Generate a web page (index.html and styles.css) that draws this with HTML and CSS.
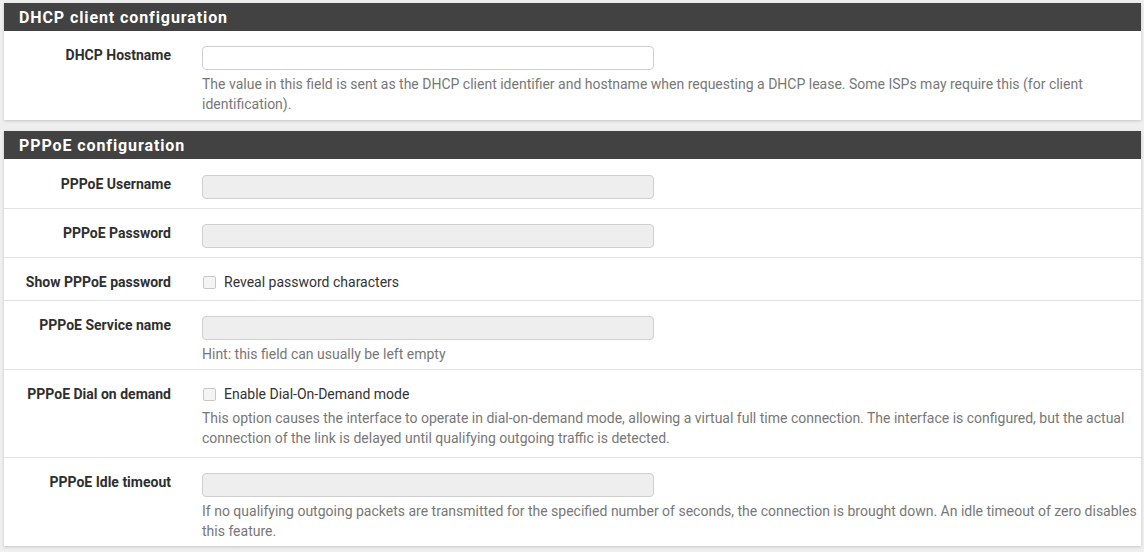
FILE: index.html
```html
<!DOCTYPE html>
<html>
<head>
<meta charset="utf-8">
<link rel="stylesheet" href="styles.css">
</head>
<body>
<div class="panel">
  <h2 class="panel-title">DHCP client configuration</h2>
  <div class="panel-body first-body">
    <div class="row">
      <div class="label">DHCP Hostname</div>
      <div class="field">
        <input class="input" type="text">
        <div class="help">The value in this field is sent as the DHCP client identifier and hostname when requesting a DHCP lease. Some ISPs may require this (for client identification).</div>
      </div>
    </div>
  </div>
</div>
<div class="panel">
  <h2 class="panel-title">PPPoE configuration</h2>
  <div class="panel-body second-body">
    <div class="row">
      <div class="label">PPPoE Username</div>
      <div class="field"><input class="input" type="text" disabled></div>
    </div>
    <div class="row">
      <div class="label">PPPoE Password</div>
      <div class="field"><input class="input" type="password" disabled></div>
    </div>
    <div class="row row-check">
      <div class="label">Show PPPoE password</div>
      <div class="field"><label class="check"><span class="box"></span>Reveal password characters</label></div>
    </div>
    <div class="row">
      <div class="label">PPPoE Service name</div>
      <div class="field">
        <input class="input" type="text" disabled>
        <div class="help">Hint: this field can usually be left empty</div>
      </div>
    </div>
    <div class="row row-check">
      <div class="label">PPPoE Dial on demand</div>
      <div class="field">
        <label class="check"><span class="box"></span>Enable Dial-On-Demand mode</label>
        <div class="help help-check">This option causes the interface to operate in dial-on-demand mode, allowing a virtual full time connection. The interface is configured, but the actual connection of the link is delayed until qualifying outgoing traffic is detected.</div>
      </div>
    </div>
    <div class="row">
      <div class="label">PPPoE Idle timeout</div>
      <div class="field">
        <input class="input" type="text" disabled>
        <div class="help">If no qualifying outgoing packets are transmitted for the specified number of seconds, the connection is brought down. An idle timeout of zero disables this feature.</div>
      </div>
    </div>
  </div>
</div>
</body>
</html>
```
FILE: styles.css
```css
html, body {
  margin: 0;
  background: #efefef;
}
body {
  padding: 3px 3px 0 4px;
  font-family: Roboto, "Liberation Sans", sans-serif;
  font-size: 14px;
  color: #333;
}
.panel {
  background: #fff;
  box-shadow: 0 1px 3px rgba(0, 0, 0, 0.18);
  margin-bottom: 11px;
}
.panel-title {
  margin: 0;
  height: 28px;
  box-sizing: border-box;
  padding: 4px 15px 0 15px;
  background: #424242;
  color: #fff;
  font-size: 16px;
  font-weight: 700;
  letter-spacing: 0.9px;
  line-height: 21px;
}
.second-body {
  padding-top: 1px;
}
.row {
  display: flex;
  border-bottom: 1px solid #e2e2e2;
  padding: 15px 0 9px 0;
}
.row:last-child {
  border-bottom: none;
}
.row:has(.help) {
  padding-bottom: 5px;
}
.row-check:has(.help) {
  padding-bottom: 9px;
}
.first-body .row {
  padding-bottom: 6px;
}
.label {
  width: 167px;
  flex: none;
  padding-right: 31px;
  text-align: right;
  font-weight: 700;
  line-height: 18px;
  color: #2f2f2f;
}
.field {
  flex: 1;
  padding-right: 2px;
}
.input {
  display: block;
  box-sizing: border-box;
  width: 452px;
  height: 24px;
  margin: 0;
  border: 1px solid #cfcfcf;
  border-radius: 4px;
  background: #fff;
}
.input:disabled {
  background: #eeeeee;
}
.help {
  margin-top: 4px;
  line-height: 20px;
  color: #777;
}
.help-check {
  margin-top: 5px;
}
.check {
  display: flex;
  align-items: center;
  font-size: 14px;
  line-height: 18px;
  color: #333;
}
.box {
  display: inline-block;
  width: 11px;
  height: 11px;
  border: 1px solid #c8c8c8;
  border-radius: 2px;
  background: #f4f4f4;
  margin: 0 8px 0 1px;
}
```
